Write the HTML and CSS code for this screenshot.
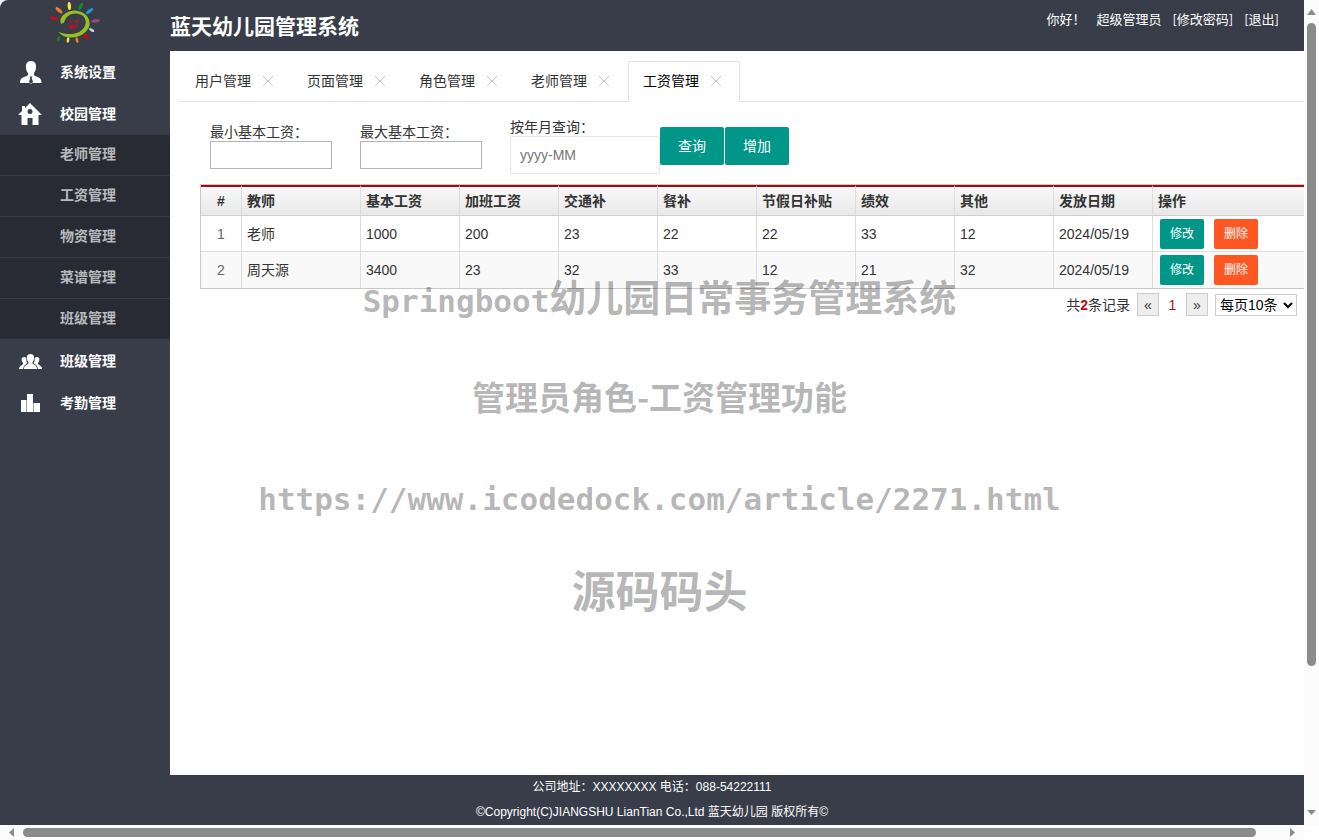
FILE: index.html
```html
<!DOCTYPE html>
<html lang="zh-CN">
<head>
<meta charset="utf-8">
<title>蓝天幼儿园管理系统</title>
<link rel="stylesheet" href="styles.css">
</head>
<body>
<div class="window">
  <div class="page">
    <header class="header">
      <div class="logo">
        <svg width="70" height="50" viewBox="0 0 210 150" aria-hidden="true">
          <path fill="#95c11f" d="M62 66C56 45 84 27 110 29C138 32 153 55 148 75C141 99 110 113 85 109C72 107 62 101 55 92C72 100 100 103 119 92C141 79 143 53 125 42C105 31 80 40 75 58C73 66 64 71 62 66Z"/>
          <ellipse cx="88" cy="15" rx="5" ry="12" fill="#f8ea3a" transform="rotate(-4 88 15)"/>
          <ellipse cx="122" cy="16" rx="5" ry="12" fill="#128a35" transform="rotate(28 122 16)"/>
          <ellipse cx="149" cy="30" rx="5" ry="13" fill="#1f97e0" transform="rotate(52 149 30)"/>
          <ellipse cx="167" cy="60" rx="13" ry="5" fill="#934b80" transform="rotate(-5 167 60)"/>
          <ellipse cx="155" cy="87" rx="9" ry="4" fill="#c9cbe9" transform="rotate(30 155 87)"/>
          <ellipse cx="138" cy="107" rx="5" ry="12" fill="#c00d1b" transform="rotate(-38 138 107)"/>
          <ellipse cx="111" cy="117" rx="4" ry="9" fill="#e5822b" transform="rotate(-14 111 117)"/>
          <ellipse cx="84" cy="117" rx="4" ry="8" fill="#f8ea3a" transform="rotate(8 84 117)"/>
          <ellipse cx="56" cy="113" rx="4" ry="7" fill="#128a35" transform="rotate(25 56 113)"/>
          <ellipse cx="43" cy="52" rx="13" ry="5" fill="#c00d1b" transform="rotate(4 43 52)"/>
          <ellipse cx="57" cy="28" rx="5" ry="13" fill="#e5822b" transform="rotate(-48 57 28)"/>
          <circle cx="92" cy="62" r="5" fill="#b8121d"/>
          <circle cx="111" cy="61" r="5" fill="#b8121d"/>
          <path fill="#b8121d" d="M84 71Q98 77 114 70Q110 83 98 84Q88 83 84 71Z"/>
        </svg>
      </div>
      <h1 class="title">蓝天幼儿园管理系统</h1>
      <div class="account">
        <span>你好！</span>
        <span>超级管理员</span>
        <a href="#">[修改密码]</a>
        <a href="#">[退出]</a>
      </div>
    </header>

    <nav class="sidebar">
      <a class="nav-item" href="#">
        <svg class="nav-icon" viewBox="0 0 24 24"><path fill-rule="evenodd" d="M13 1C17 1 18.500 4 18 8C17.700 11 16.500 12 16 13V15C18 17 23 16.500 23.500 22V23H2V22C2.500 16.500 8 17 10 15V13C9 12 8.300 11 8 8C7.500 4 9 1 13 1ZM11.500 16.500L12.300 18L11 22L13 24L15 22L13.700 18L14.500 16.500Z"/></svg>
        <span>系统设置</span>
      </a>
      <a class="nav-item" href="#">
        <svg class="nav-icon" viewBox="0 0 24 24"><path fill-rule="evenodd" d="M12 1L24 13H20.500V23H14.500V16H9.500V23H3.500V13H0L4 9V4H7V6ZM12 7A2.500 2.500 0 1 0 12 12A2.500 2.500 0 1 0 12 7Z"/></svg>
        <span>校园管理</span>
      </a>
      <div class="subnav">
        <a href="#">老师管理</a>
        <a href="#">工资管理</a>
        <a href="#">物资管理</a>
        <a href="#">菜谱管理</a>
        <a href="#">班级管理</a>
      </div>
      <a class="nav-item" href="#">
        <svg class="nav-icon" viewBox="0 0 24 24"><path d="M12.500 5C16 5 16.500 8 16 10C15.700 12 15 12.500 14.500 13V14.500C16 16 19 16 19 20H6C6 16 9 16 10.500 14.500V13C10 12.500 9.300 12 9 10C8.500 8 9 5 12.500 5Z"/><path d="M6 8C8 8 8.500 9 8.300 10.500C8.500 13 9 13.500 9.500 14C8 15.500 5.500 16 5.200 20H1C1 17 4 16.500 5 15V14C3.500 12.500 2.500 8 6 8ZM19 8C17 8 16.500 9 16.700 10.500C16.500 13 16 13.500 15.500 14C17 15.500 19.500 16 19.800 20H24.500C24 17 21 16.500 20 15V14C21.500 12.500 22.500 8 19 8Z"/></svg>
        <span>班级管理</span>
      </a>
      <a class="nav-item" href="#">
        <svg class="nav-icon" viewBox="0 0 24 24"><path d="M3 9H8.500V21H3ZM9 3H15V21H9ZM15.500 12H22V21H15.500Z"/></svg>
        <span>考勤管理</span>
      </a>
    </nav>

    <main class="main">
      <div class="tabs">
        <div class="tab"><a href="#">用户管理</a><button class="close" aria-label="关闭用户管理"><svg width="10" height="10" viewBox="0 0 10 10"><path d="M0 0L10 10M10 0L0 10"/></svg></button></div>
        <div class="tab"><a href="#">页面管理</a><button class="close" aria-label="关闭页面管理"><svg width="10" height="10" viewBox="0 0 10 10"><path d="M0 0L10 10M10 0L0 10"/></svg></button></div>
        <div class="tab"><a href="#">角色管理</a><button class="close" aria-label="关闭角色管理"><svg width="10" height="10" viewBox="0 0 10 10"><path d="M0 0L10 10M10 0L0 10"/></svg></button></div>
        <div class="tab"><a href="#">老师管理</a><button class="close" aria-label="关闭老师管理"><svg width="10" height="10" viewBox="0 0 10 10"><path d="M0 0L10 10M10 0L0 10"/></svg></button></div>
        <div class="tab tab-active"><a href="#">工资管理</a><button class="close" aria-label="关闭工资管理"><svg width="10" height="10" viewBox="0 0 10 10"><path d="M0 0L10 10M10 0L0 10"/></svg></button></div>
      </div>

      <form class="search">
        <div class="field">
          <label for="min">最小基本工资：</label>
          <input class="plain" id="min" type="text">
        </div>
        <div class="field">
          <label for="max">最大基本工资：</label>
          <input class="plain" id="max" type="text">
        </div>
        <div class="field">
          <label for="month">按年月查询：</label>
          <input class="month" id="month" type="text" placeholder="yyyy-MM">
        </div>
        <div class="actions">
          <button type="button">查询</button>
          <button type="button">增加</button>
        </div>
      </form>

      <table class="grid">
        <colgroup>
          <col class="c-index"><col class="c-name">
          <col class="c-data"><col class="c-data"><col class="c-data"><col class="c-data"><col class="c-data"><col class="c-data"><col class="c-data"><col class="c-data">
          <col>
        </colgroup>
        <thead>
          <tr><th>#</th><th>教师</th><th>基本工资</th><th>加班工资</th><th>交通补</th><th>餐补</th><th>节假日补贴</th><th>绩效</th><th>其他</th><th>发放日期</th><th>操作</th></tr>
        </thead>
        <tbody>
          <tr><td>1</td><td>老师</td><td>1000</td><td>200</td><td>23</td><td>22</td><td>22</td><td>33</td><td>12</td><td>2024/05/19</td><td><div class="row-actions"><button class="edit">修改</button><button class="delete">删除</button></div></td></tr>
          <tr><td>2</td><td>周天源</td><td>3400</td><td>23</td><td>32</td><td>33</td><td>12</td><td>21</td><td>32</td><td>2024/05/19</td><td><div class="row-actions"><button class="edit">修改</button><button class="delete">删除</button></div></td></tr>
        </tbody>
      </table>

      <div class="pager">
        <span>共<b>2</b>条记录</span>
        <button aria-label="上一页">«</button>
        <span class="current">1</span>
        <button aria-label="下一页">»</button>
        <select aria-label="每页条数"><option>每页10条</option></select>
      </div>
    </main>

    <footer class="footer">
      <p>公司地址：XXXXXXXX 电话：088-54222111</p>
      <p>©Copyright(C)JIANGSHU LianTian Co.,Ltd 蓝天幼儿园 版权所有©</p>
    </footer>
  </div>

  <div class="scroll scroll-v">
    <svg class="arrow" viewBox="0 0 15 23"><path d="M7.500 9L12 15H3Z"/></svg>
    <div class="track"><div class="thumb"></div></div>
    <svg class="arrow" viewBox="0 0 15 23"><path d="M3 8H12L7.500 13Z"/></svg>
  </div>
  <div class="scroll scroll-h">
    <svg class="arrow" viewBox="0 0 23 15"><path d="M9 7.500L14 3V12Z"/></svg>
    <div class="track"><div class="thumb"></div></div>
    <svg class="arrow" viewBox="0 0 23 15"><path d="M9 3L14 7.500L9 12Z"/></svg>
  </div>

  <div class="watermark">
    <p class="mark-name"><span class="mono">Springboot</span>幼儿园日常事务管理系统</p>
    <p class="mark-role">管理员角色-工资管理功能</p>
    <p class="mark-url"><span class="mono">https://www.icodedock.com/article/2271.html</span></p>
    <p class="mark-brand">源码码头</p>
  </div>
</div>
</body>
</html>
```
FILE: styles.css
```css
* {
  box-sizing: border-box;
}

body {
  margin: 0;
  background: #fff;
  color: #333;
  font: 14px/18px "Liberation Sans", "Noto Sans CJK SC", sans-serif;
}

a {
  color: inherit;
  text-decoration: none;
}

button,
input,
select {
  font: inherit;
  color: inherit;
}

button {
  border: 0;
  padding: 0;
  cursor: pointer;
}

p {
  margin: 0;
}

.window {
  position: relative;
  display: grid;
  grid-template: minmax(0, 1fr) 15px / minmax(0, 1fr) 15px;
  height: 100vh;
  overflow: hidden;
}

.page {
  display: grid;
  grid-template: auto minmax(0, 1fr) auto / 170px minmax(0, 1fr);
  border-top-left-radius: 8px;
  background: #393d49;
  overflow: hidden;
}

/* Header */
.header {
  grid-column: 1 / -1;
  display: flex;
  height: 51px;
  color: #fff;
}

.logo {
  width: 170px;
  padding: 1px 0 0 40px;
}

.title {
  margin: 0;
  font-size: 21px;
  line-height: 54px;
}

.account {
  display: flex;
  gap: 11px;
  margin-left: auto;
  padding-right: 25px;
  font-family: "Noto Sans CJK SC", sans-serif;
  font-size: 13px;
  line-height: 38px;
  white-space: nowrap;
}

/* Sidebar */
.sidebar {
  color: #fff;
  font-weight: bold;
}

.nav-item {
  display: flex;
  align-items: center;
  gap: 18px;
  height: 42px;
  padding-left: 18px;
}

.nav-icon {
  width: 24px;
  height: 24px;
  fill: #fff;
}

.subnav {
  margin-bottom: 1px;
  background: #282b33;
  color: #b8b9bc;
}

.subnav a {
  display: block;
  padding: 0 0 2px 60px;
  line-height: 38px;
}

.subnav a + a {
  border-top: 1px solid #393d49;
}

/* Main area */
.main {
  background: #fff;
  padding-top: 10px;
  overflow: hidden;
}

.tabs {
  display: flex;
  height: 41px;
  margin-left: 10px;
  border-bottom: 1px solid #e2e2e2;
}

.tab {
  display: flex;
  align-items: center;
  gap: 12px;
  width: 112px;
  height: 41px;
  padding: 0 0 2px 15px;
}

.tab-active {
  padding-left: 14px;
  border: 1px solid #e2e2e2;
  border-bottom-color: #fff;
  border-radius: 2px 2px 0 0;
  color: #000;
}

.close {
  display: flex;
  background: none;
}

.close path {
  fill: none;
  stroke: #c2c2c2;
}

.search {
  display: flex;
  align-items: center;
  padding: 16px 0 10px 40px;
}

.field {
  width: 150px;
}

.field label {
  display: block;
  white-space: nowrap;
}

.field input {
  display: block;
  border: 1px solid #b5b5b5;
  background: #fff;
}

.field .plain {
  width: 122px;
  height: 28px;
}

.field .month {
  width: 150px;
  height: 38px;
  padding: 0 9px;
  border-color: #e6e6e6;
  border-radius: 2px;
}

.month::placeholder {
  color: #757575;
}

.actions {
  display: flex;
  gap: 1px;
}

.actions button {
  width: 64px;
  height: 38px;
  border-radius: 2px;
  background: #009688;
  color: #fff;
}

/* Salary table */
.grid {
  width: calc(100% - 30px);
  margin-left: 30px;
  table-layout: fixed;
  border-collapse: separate;
  border-spacing: 0;
  border-top: 1px solid #f5b5b5;
  border-left: 1px solid #c8c8c8;
  border-bottom: 1px solid #c8c8c8;
}

.c-index {
  width: 40px;
}

.c-name {
  width: 119px;
}

.c-data {
  width: 99px;
}

.grid th,
.grid td {
  padding: 0 5px;
  border-left: 1px solid #ddd;
  text-align: left;
  white-space: nowrap;
}

.grid th:first-child,
.grid td:first-child {
  border-left: 0;
  text-align: center;
}

.grid th {
  height: 31px;
  border-top: 2px solid #8b1518;
  border-bottom: 1px solid #d0d0d0;
  background: linear-gradient(#f9f9f9, #e8e8e8);
}

.grid td {
  height: 36px;
  border-bottom: 1px solid #ddd;
}

.grid tbody tr:last-child td {
  border-bottom: 0;
}

.grid td:first-child {
  color: #666;
}

.grid tbody tr:nth-child(2) {
  background: #f9f9f9;
}

.row-actions {
  display: flex;
  gap: 10px;
  padding-left: 2px;
}

.row-actions button {
  width: 44px;
  height: 30px;
  border-radius: 2px;
  color: #fff;
  font-size: 12px;
}

.edit {
  background: #009688;
}

.delete {
  background: #ff5722;
}

/* Pager */
.pager {
  display: flex;
  align-items: center;
  justify-content: flex-end;
  gap: 7px;
  padding: 4px 7px 0 0;
}

.pager b,
.current {
  color: #b01116;
}

.current {
  width: 13px;
  text-align: center;
}

.pager button {
  width: 22px;
  height: 23px;
  border: 1px solid #ccc;
  background: #eee;
}

.pager select {
  width: 82px;
  height: 22px;
  padding: 0;
  border: 1px solid #ccc;
  background: #fff;
  color: #000;
}

/* Footer */
.footer {
  grid-column: 1 / -1;
  color: #fff;
  font-size: 12px;
  line-height: 25px;
  text-align: center;
}

/* Scroll bars */
.scroll {
  display: flex;
  background: #fcfcfc;
}

.scroll-v {
  flex-direction: column;
}

.scroll-h {
  grid-column: 1;
}

.arrow {
  display: block;
  flex: none;
  fill: #8b8b8b;
}

.scroll-v .arrow {
  width: 15px;
  height: 23px;
}

.scroll-h .arrow {
  width: 23px;
  height: 15px;
}

.track {
  flex: 1;
}

.scroll-v .track {
  padding: 0 3px;
}

.scroll-h .track {
  padding: 3px 0;
}

.thumb {
  border-radius: 5px;
  background: #8b8b8b;
}

.scroll-v .thumb {
  height: 82.5%;
}

.scroll-h .thumb {
  width: 98%;
  height: 9px;
}

/* Watermark laid over the page */
.watermark {
  position: absolute;
  top: 246px;
  left: 0;
  right: 0;
  color: rgba(0, 0, 0, 0.3);
  font-family: "Noto Sans CJK SC", sans-serif;
  font-weight: bold;
  line-height: 100px;
  text-align: center;
  white-space: nowrap;
  pointer-events: none;
}

.watermark .mono {
  font-family: "DejaVu Sans Mono", monospace;
  font-size: 31px;
  line-height: 31px;
}

.mark-name {
  font-size: 37px;
}

.mark-role,
.mark-url {
  font-size: 33px;
}

.mark-brand {
  font-size: 44px;
  line-height: 86px;
}
```
